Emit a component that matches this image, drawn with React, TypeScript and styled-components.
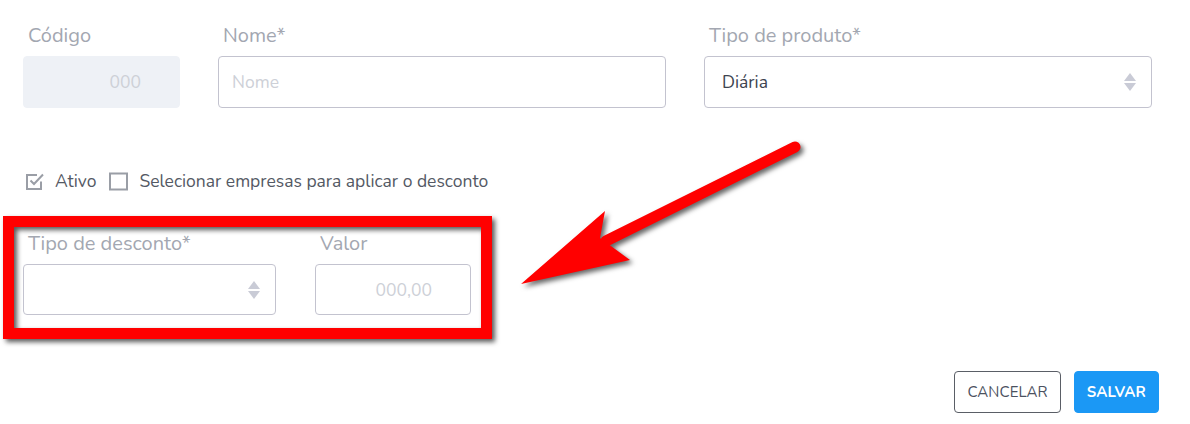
import React from "react";
import styled, { createGlobalStyle } from "styled-components";

const Global = createGlobalStyle`
  html, body { margin: 0; padding: 0; background: #fff; }
  body { font-family: "Nunito", "Lato", "Noto Sans", sans-serif; }
  * { box-sizing: border-box; }
`;

const Page = styled.div`
  position: relative;
  width: 1190px;
  height: 424px;
  padding: 24px 31px 0 23px;
  overflow: hidden;
`;

const TopRow = styled.div`
  display: grid;
  grid-template-columns: 157px 448px 448px;
  column-gap: 38px;
`;

const Field = styled.div`
  display: flex;
  flex-direction: column;
`;

const Label = styled.label`
  font-size: 20px;
  line-height: 24px;
  color: #a3a7b1;
  padding-left: 5px;
  margin-bottom: 8px;
`;

const Box = styled.div<{ $h?: number; $disabled?: boolean; $align?: string }>`
  height: ${(p) => p.$h ?? 52}px;
  border: 1px solid ${(p) => (p.$disabled ? "#eef1f6" : "#c3c3cf")};
  background: ${(p) => (p.$disabled ? "#eef1f6" : "#fff")};
  border-radius: 4px;
  display: flex;
  align-items: center;
  justify-content: ${(p) => p.$align ?? "flex-start"};
  padding: 0 15px 0 13px;
  font-size: 17.5px;
`;

const Placeholder = styled.span<{ $pr?: number }>`
  color: #cdd0d7;
  padding-right: ${(p) => p.$pr ?? 0}px;
`;

const Value = styled.span`
  color: #3d4350;
  padding-left: 4px;
  flex: 1;
`;

const ChecksRow = styled.div`
  display: flex;
  align-items: center;
  margin-top: 61px;
  height: 24px;
  padding-left: 2px;
`;

const Check = styled.div`
  display: flex;
  align-items: center;
  gap: 11px;
  margin-right: 13px;
  font-size: 17.5px;
  color: #545964;
`;

const Discount = styled.div`
  position: relative;
  margin-top: 39px;
  display: inline-grid;
  grid-template-columns: 253px 156px;
  column-gap: 39px;
`;

const Highlight = styled.div`
  position: absolute;
  top: -16px;
  left: -20px;
  right: -21px;
  bottom: -24px;
  border: 11px solid #ff0000;
  filter: drop-shadow(3px 3px 2.5px rgba(0, 0, 0, 0.65));
  pointer-events: none;
`;

const Actions = styled.div`
  display: flex;
  justify-content: flex-end;
  gap: 13px;
  margin-top: 56px;
`;

const Button = styled.button<{ $primary?: boolean }>`
  height: 42px;
  border-radius: 4px;
  font-family: inherit;
  font-size: 15px;
  letter-spacing: 0.1px;
  padding: 0 12px;
  border: 1px solid ${(p) => (p.$primary ? "#1b98f5" : "#5a5e66")};
  background: ${(p) => (p.$primary ? "#1b98f5" : "#fff")};
  color: ${(p) => (p.$primary ? "#fff" : "#4b5160")};
  font-weight: ${(p) => (p.$primary ? 700 : 400)};
`;

const Overlay = styled.svg`
  position: absolute;
  left: 0;
  top: 0;
  pointer-events: none;
  filter: drop-shadow(3px 3px 2.5px rgba(0, 0, 0, 0.6));
`;

const SortIcon = () => (
  <svg width="12" height="18" viewBox="0 0 12 18">
    <path d="M6 0 L12 8 H0 Z" fill="#c9cbd6" />
    <path d="M0 10 H12 L6 18 Z" fill="#c9cbd6" />
  </svg>
);

const CheckedIcon = () => (
  <svg width="19" height="19" viewBox="0 0 19 19" fill="none">
    <path d="M16 9.5V17H2V3h10" stroke="#9a9ea6" strokeWidth="2" />
    <path d="M5.5 8.5l3.5 3.5L18 2.5" stroke="#9a9ea6" strokeWidth="2" />
  </svg>
);

const UncheckedIcon = () => (
  <svg width="19" height="19" viewBox="0 0 19 19" fill="none">
    <rect x="1" y="1.5" width="17" height="16" stroke="#9a9ea6" strokeWidth="2" />
  </svg>
);

export default function App() {
  return (
    <>
      <Global />
      <Page>
        <TopRow>
          <Field>
            <Label>Código</Label>
            <Box $disabled $align="flex-end">
              <Placeholder $pr={23}>000</Placeholder>
            </Box>
          </Field>
          <Field>
            <Label>Nome*</Label>
            <Box>
              <Placeholder>Nome</Placeholder>
            </Box>
          </Field>
          <Field>
            <Label>Tipo de produto*</Label>
            <Box>
              <Value>Diária</Value>
              <SortIcon />
            </Box>
          </Field>
        </TopRow>

        <ChecksRow>
          <Check>
            <CheckedIcon />
            Ativo
          </Check>
          <Check>
            <UncheckedIcon />
            Selecionar empresas para aplicar o desconto
          </Check>
        </ChecksRow>

        <Discount>
          <Field>
            <Label>Tipo de desconto*</Label>
            <Box $h={51} $align="flex-end">
              <SortIcon />
            </Box>
          </Field>
          <Field>
            <Label>Valor</Label>
            <Box $h={51} $align="flex-end">
              <Placeholder $pr={23}>000,00</Placeholder>
            </Box>
          </Field>
          <Highlight />
        </Discount>

        <Actions>
          <Button>CANCELAR</Button>
          <Button $primary>SALVAR</Button>
        </Actions>

        <Overlay width="1190" height="424" viewBox="0 0 1190 424">
          <line x1="795" y1="147" x2="606" y2="241" stroke="#ff0000" strokeWidth="11" strokeLinecap="round" />
          <path d="M521 284 L605 211 L600 238 L630 260 Z" fill="#ff0000" />
        </Overlay>
      </Page>
    </>
  );
}
